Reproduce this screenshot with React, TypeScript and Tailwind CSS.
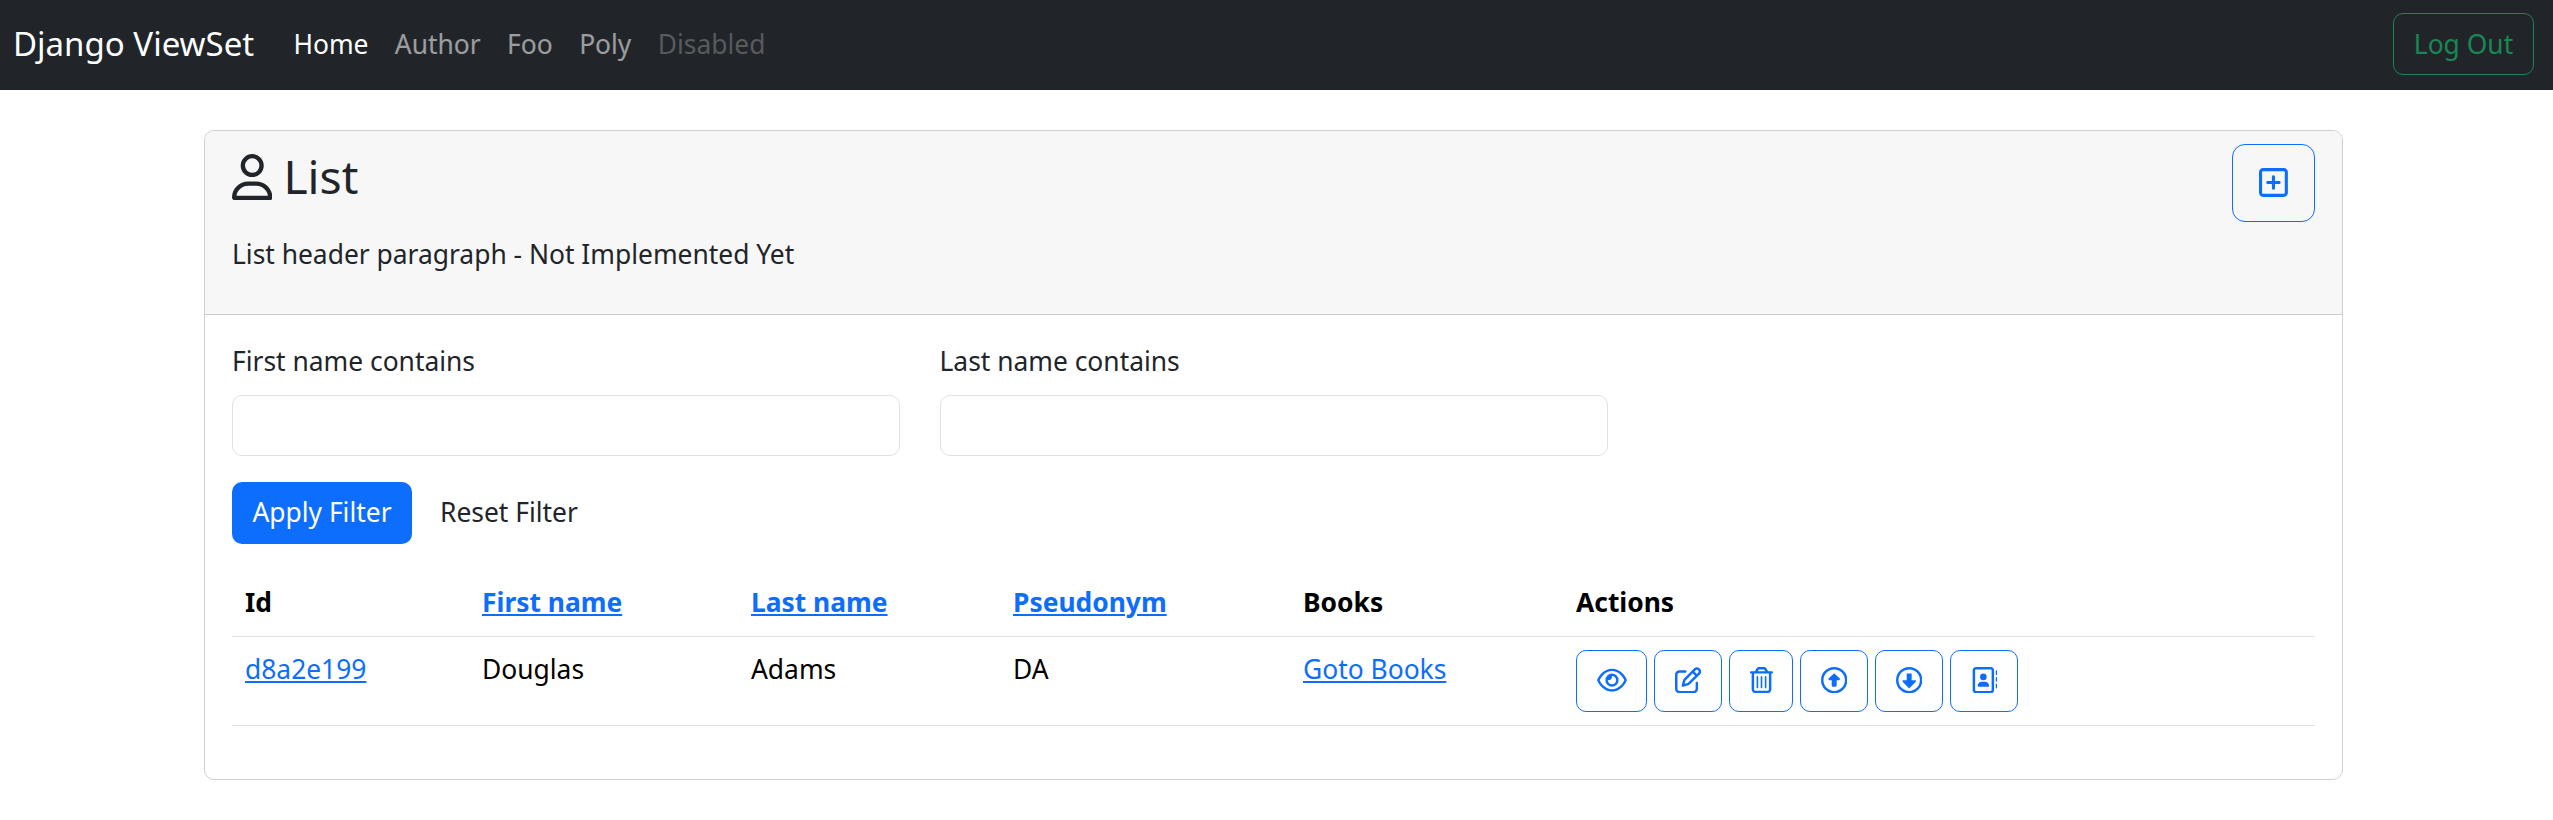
import React from "react";
import {
  FaRegUser,
  FaRegSquarePlus,
  FaRegEye,
  FaRegPenToSquare,
  FaRegTrashCan,
  FaRegCircleUp,
  FaRegCircleDown,
  FaRegAddressBook,
} from "react-icons/fa6";

const navLinks = [
  { label: "Home", tone: "text-white" },
  { label: "Author", tone: "text-white/55" },
  { label: "Foo", tone: "text-white/55" },
  { label: "Poly", tone: "text-white/55" },
  { label: "Disabled", tone: "text-white/25" },
];

const actions = [
  { label: "Detail", Icon: FaRegEye, width: "w-[71px]", icon: "w-[30px]" },
  { label: "Update", Icon: FaRegPenToSquare, width: "w-[68px]", icon: "w-[26.4px]" },
  { label: "Delete", Icon: FaRegTrashCan, width: "w-[64px]", icon: "w-[23px]" },
  { label: "Up", Icon: FaRegCircleUp, width: "w-[68px]", icon: "w-[26.4px]" },
  { label: "Down", Icon: FaRegCircleDown, width: "w-[68px]", icon: "w-[26.4px]" },
  { label: "Contacts", Icon: FaRegAddressBook, width: "w-[68px]", icon: "w-[26.4px]" },
];

const linkStyle =
  "text-[#0d6efd] underline decoration-2 underline-offset-[2px]";
const headCell = "border-b border-[#dee2e6] px-[13px] pt-[14px] font-bold";
const bodyCell = "border-b border-[#dee2e6] px-[13px] pt-[12px]";

function Navbar() {
  return (
    <nav className="flex h-[90px] items-center bg-[#212529] pb-[2px] pl-[13px] pr-[19px]">
      <a className="mr-[26px] text-[33px] leading-[50px] text-white">Django ViewSet</a>
      <ul className="flex grow pb-px">
        {navLinks.map((link) => (
          <li key={link.label} className={`px-[13.2px] ${link.tone}`}>
            {link.label}
          </li>
        ))}
      </ul>
      <button className="flex h-[62px] w-[141px] items-center justify-center rounded-[10px] border border-[#198754] pb-px text-[#198754]">
        Log Out
      </button>
    </nav>
  );
}

function Field({ label }: { label: string }) {
  return (
    <label className="flex flex-col gap-[14px]">
      <span>{label}</span>
      <input className="h-[61px] w-full rounded-[10px] border border-[#dee2e6] bg-white px-5 outline-none" />
    </label>
  );
}

function AuthorTable() {
  return (
    <table className="mt-[24px] w-full table-fixed border-separate border-spacing-0 text-left text-black">
      <colgroup>
        <col className="w-[237px]" />
        <col className="w-[269px]" />
        <col className="w-[262px]" />
        <col className="w-[290px]" />
        <col className="w-[273px]" />
        <col />
      </colgroup>
      <thead>
        <tr className="h-[69px] align-top">
          <th className={headCell}>Id</th>
          <th className={headCell}><a className={linkStyle}>First name</a></th>
          <th className={headCell}><a className={linkStyle}>Last name</a></th>
          <th className={headCell}><a className={linkStyle}>Pseudonym</a></th>
          <th className={headCell}>Books</th>
          <th className={headCell}>Actions</th>
        </tr>
      </thead>
      <tbody>
        <tr className="h-[89px] align-top">
          <td className={bodyCell}><a className={linkStyle}>d8a2e199</a></td>
          <td className={bodyCell}>Douglas</td>
          <td className={bodyCell}>Adams</td>
          <td className={bodyCell}>DA</td>
          <td className={bodyCell}><a className={linkStyle}>Goto Books</a></td>
          <td className="border-b border-[#dee2e6] px-[13px] pt-[13px]">
            <div className="flex gap-[7px]">
              {actions.map(({ label, Icon, width, icon }) => (
                <button
                  key={label}
                  aria-label={label}
                  className={`flex h-[62px] ${width} items-center justify-center rounded-[10px] border border-[#0d6efd] pb-[2px] text-[#0d6efd]`}
                >
                  <Icon className={`h-[26.4px] ${icon}`} />
                </button>
              ))}
            </div>
          </td>
        </tr>
      </tbody>
    </table>
  );
}

export default function App() {
  return (
    <div className="min-h-[820px] bg-white font-['Noto_Sans',sans-serif] text-[26.4px] leading-[40px] text-[#212529]">
      <Navbar />
      <main className="ml-[204px] mt-[40px] h-[650px] w-[2139px] overflow-hidden rounded-[10px] border border-[#cfcfcf]">
        <header className="flex h-[184px] items-start justify-between border-b border-[#cbcbcb] bg-[#f7f7f7] px-[27px] pt-[13px]">
          <div>
            <h3 className="mt-[5px] flex h-[56px] items-center gap-[11px] text-[46.2px] leading-[56px]">
              <FaRegUser className="h-[46.2px] w-[40.43px]" />
              List
            </h3>
            <p className="mt-[29px]">List header paragraph - Not Implemented Yet</p>
          </div>
          <button
            aria-label="Create"
            className="flex h-[78px] w-[83px] items-center justify-center rounded-[13px] border border-[#0d6efd] pb-px text-[#0d6efd]"
          >
            <FaRegSquarePlus className="h-[33px] w-[28.88px]" />
          </button>
        </header>
        <section className="px-[27px] pt-[26px]">
          <div className="grid grid-cols-3 gap-x-[39.5px]">
            <Field label="First name contains" />
            <Field label="Last name contains" />
          </div>
          <div className="mt-[26px] flex gap-[7px]">
            <button className="flex h-[62px] w-[180px] items-center justify-center rounded-[10px] bg-[#0d6efd] pb-[2px] text-white">
              Apply Filter
            </button>
            <button className="flex h-[62px] items-center px-[21px] pb-[2px]">Reset Filter</button>
          </div>
          <AuthorTable />
        </section>
      </main>
    </div>
  );
}
